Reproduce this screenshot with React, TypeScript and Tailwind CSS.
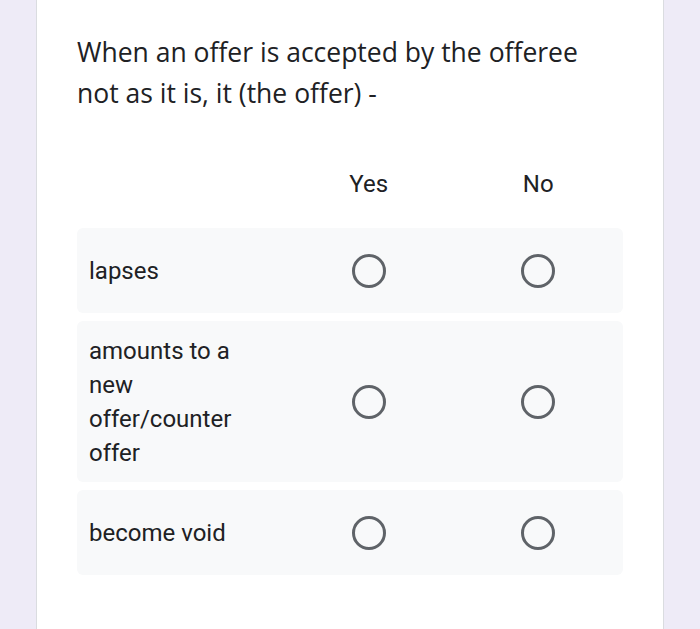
import React from "react";

const rows = [
  { label: "lapses", h: "h-[85px]" },
  { label: "amounts to a new offer/counter offer", h: "h-[161px]" },
  { label: "become void", h: "h-[85px]" },
];

function Radio() {
  return (
    <div className="h-[34px] w-[34px] rounded-full border-[3px] border-[#5f6368]" />
  );
}

export default function App() {
  return (
    <div className="flex h-[629px] w-[700px] justify-center overflow-hidden bg-[#eeebf7] font-['Roboto',sans-serif] text-[#202124]">
      <div className="h-full w-[628px] border-x border-[#dadce0] bg-white px-[40px] pt-[32px]">
        <h1 className="max-w-[525px] font-['Open_Sans',sans-serif] text-[26.5px] leading-[41px] text-[#202124]">
          When an offer is accepted by the offeree not as it is, it (the offer) -
        </h1>

        <div className="mt-[48px] flex h-[44px] items-center text-[24px]">
          <div className="w-[207px]" />
          <div className="flex flex-1 justify-center">Yes</div>
          <div className="flex flex-1 justify-center">No</div>
        </div>

        <div className="mt-[22px] flex flex-col gap-[8px]">
          {rows.map((r) => (
            <div
              key={r.label}
              className={`flex items-center rounded-md bg-[#f8f9fa] ${r.h}`}
            >
              <div className="w-[207px] pl-3 pr-[40px] text-[24px] leading-[34px]">
                {r.label}
              </div>
              <div className="flex flex-1 justify-center">
                <Radio />
              </div>
              <div className="flex flex-1 justify-center">
                <Radio />
              </div>
            </div>
          ))}
        </div>
      </div>
    </div>
  );
}
